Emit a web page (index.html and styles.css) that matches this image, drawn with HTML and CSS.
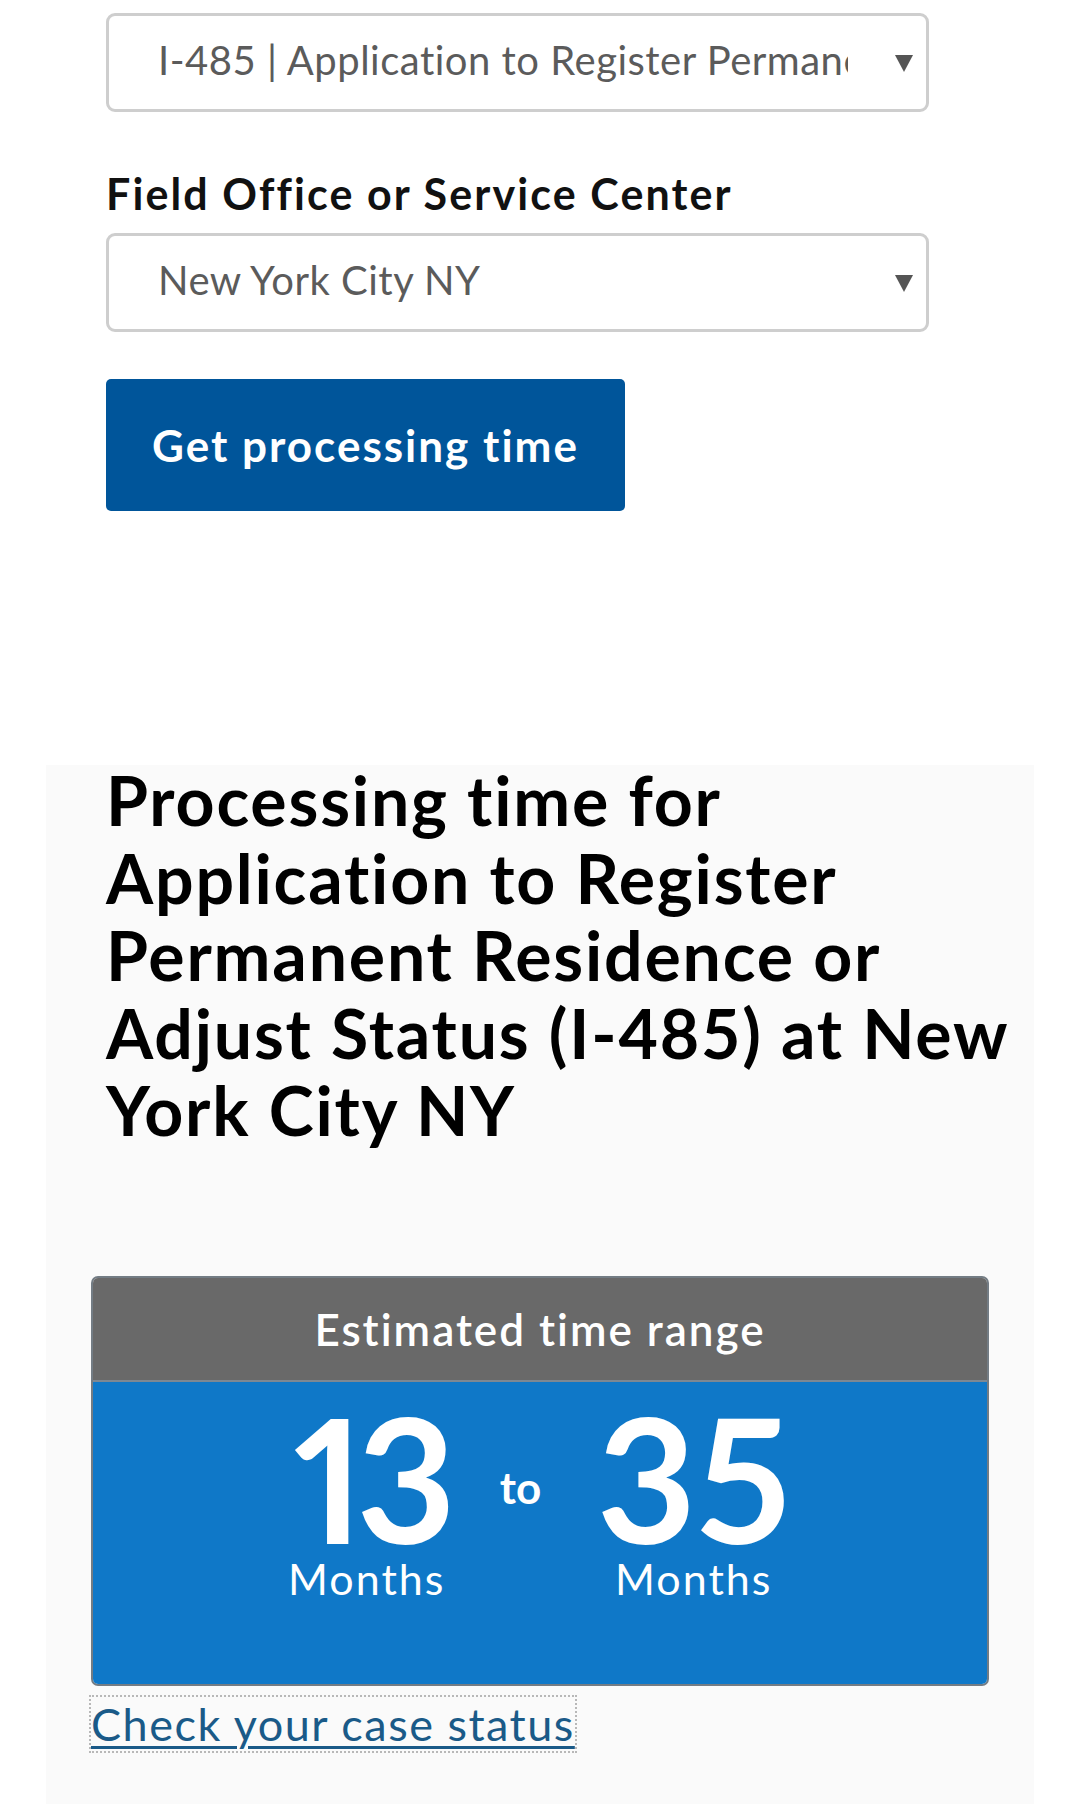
FILE: index.html
```html
<!DOCTYPE html>
<html lang="en">
<head>
<meta charset="utf-8">
<title>Processing time</title>
<link rel="stylesheet" href="styles.css">
</head>
<body>
<div class="form">
  <div class="select">
    <span class="select-text">I-485 | Application to Register Permanent Residence or Adjust Status</span>
    <svg class="arrow" width="18" height="18" viewBox="0 0 18 18"><polygon points="0,1 18,1 9,18" fill="#555"/></svg>
  </div>
  <label class="field-label">Field Office or Service Center</label>
  <div class="select">
    <span class="select-text">New York City NY</span>
    <svg class="arrow" width="18" height="18" viewBox="0 0 18 18"><polygon points="0,1 18,1 9,18" fill="#555"/></svg>
  </div>
  <button class="btn" type="button">Get processing time</button>
</div>

<section class="panel">
  <h2 class="title">Processing time for Application to Register Permanent Residence or Adjust Status (I-485) at New York City NY</h2>
  <div class="range">
    <div class="range-head">Estimated time range</div>
    <div class="range-body">
      <div class="range-col col-a">
        <div class="num">13</div>
        <div class="unit">Months</div>
      </div>
      <div class="range-to">to</div>
      <div class="range-col col-b">
        <div class="num">35</div>
        <div class="unit">Months</div>
      </div>
    </div>
  </div>
  <p class="status"><a href="#">Check your case status</a></p>
</section>
</body>
</html>
```
FILE: styles.css
```css
html, body {
  margin: 0;
  padding: 0;
  background: #ffffff;
}

body {
  font-family: Lato, "Noto Sans", "Liberation Sans", sans-serif;
  font-variant-ligatures: none;
  color: #000;
}

.form {
  width: 823px;
  margin-left: 106px;
  padding-top: 13px;
}

.select {
  display: flex;
  align-items: center;
  box-sizing: border-box;
  height: 99px;
  border: 3px solid #cecece;
  border-radius: 9px;
  padding: 0 13px 0 49px;
  background: #fff;
  font-size: 40px;
  letter-spacing: 0.5px;
  color: #5b5b5b;
}

.select-text {
  flex: 1;
  min-width: 0;
  overflow: hidden;
  white-space: nowrap;
  margin-bottom: 6px;
}

.arrow {
  flex: none;
  margin-left: 47px;
}

.field-label {
  display: block;
  margin: 56px 0 13px;
  font-size: 43px;
  line-height: 52px;
  font-weight: 700;
  letter-spacing: 2.1px;
  color: #111;
}

.btn {
  display: block;
  box-sizing: border-box;
  width: 519px;
  height: 132px;
  margin-top: 47px;
  border: none;
  border-radius: 5px;
  background: #00559a;
  color: #fff;
  font-family: inherit;
  font-size: 44px;
  font-weight: 700;
  letter-spacing: 2px;
  padding: 0;
}

.panel {
  display: flow-root;
  margin: 254px 46px 0;
  background: #fafafa;
  padding: 0 15px 80px 45px;
}

.title {
  margin: -4px 0 0;
  padding-left: 15px;
  font-size: 68px;
  line-height: 77.5px;
  font-weight: 700;
  letter-spacing: 1.8px;
  color: #000;
}

.range {
  margin: 127px 30px 0 0;
  border: 2px solid #737c84;
  border-radius: 7px;
  overflow: hidden;
}

.range-head {
  display: flex;
  align-items: center;
  justify-content: center;
  height: 102px;
  background: #696969;
  border-bottom: 2px solid #7d8893;
  color: #fff;
  font-size: 44px;
  font-weight: 600;
  letter-spacing: 2px;
}

.range-body {
  display: flex;
  justify-content: center;
  align-items: flex-start;
  gap: 51px;
  box-sizing: border-box;
  height: 302px;
  padding-top: 16px;
  background: #0f78c8;
  color: #fff;
}

.range-col {
  display: flex;
  flex-direction: column;
  align-items: center;
}

.col-a { width: 164px; }
.col-b { width: 203px; }

.num {
  font-size: 172px;
  line-height: 160px;
  font-weight: 700;
  font-variant-numeric: proportional-nums;
  white-space: nowrap;
}

.col-a .num {
  letter-spacing: -8px;
  margin-right: -8px;
}

.unit {
  font-size: 43px;
  line-height: 42px;
  font-weight: 400;
  letter-spacing: 2px;
}

.range-to {
  margin-top: 67px;
  font-size: 44px;
  line-height: 44px;
  font-weight: 700;
}

.status {
  margin: 11px 0 0;
  font-size: 45px;
  line-height: 54px;
  letter-spacing: 1.5px;
}

.status a {
  color: #1a5a88;
  text-decoration: underline;
  text-decoration-thickness: 3px;
  text-underline-offset: 5px;
  outline: 2px dotted #b8b8b8;
}
```
